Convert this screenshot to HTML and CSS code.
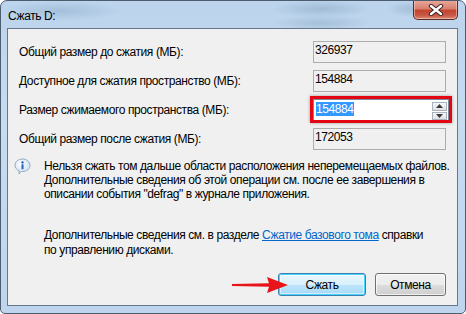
FILE: index.html
```html
<!DOCTYPE html>
<html lang="ru">
<head>
<meta charset="utf-8">
<link rel="stylesheet" href="styles.css">
</head>
<body>
<div class="window">
  <div class="titlebar">
    <span class="title">Сжать D:</span>
    <div class="close">
      <svg width="18" height="12" viewBox="0 0 18 12">
        <path d="M4 2 L14 10 M14 2 L4 10" stroke="#3a2020" stroke-width="4.2" stroke-linecap="round"/>
        <path d="M4 2 L14 10 M14 2 L4 10" stroke="#ffffff" stroke-width="2.4" stroke-linecap="round"/>
      </svg>
    </div>
  </div>
  <div class="client">
    <div class="rows">
      <div class="row"><span class="label">Общий размер до сжатия (МБ):</span><div class="field">326937</div></div>
      <div class="row"><span class="label">Доступное для сжатия пространство (МБ):</span><div class="field">154884</div></div>
      <div class="row"><span class="label">Размер сжимаемого пространства (МБ):</span>
        <div class="spin">
          <span class="spin-value"><span class="sel">154884</span></span>
          <div class="spin-btns">
            <div class="spin-btn"><svg width="7" height="4" viewBox="0 0 7 4"><path d="M0 4 L3.5 0 L7 4 Z" fill="#3a3a3a"/></svg></div>
            <div class="spin-btn"><svg width="7" height="4" viewBox="0 0 7 4"><path d="M0 0 L3.5 4 L7 0 Z" fill="#3a3a3a"/></svg></div>
          </div>
        </div>
      </div>
      <div class="row"><span class="label">Общий размер после сжатия (МБ):</span><div class="field">172053</div></div>
    </div>
    <div class="info">
      <svg class="info-icon" width="17" height="17" viewBox="0 0 17 17">
        <defs>
          <radialGradient id="bub" cx="0.4" cy="0.35" r="0.7">
            <stop offset="0" stop-color="#ffffff"/>
            <stop offset="1" stop-color="#c9dcef"/>
          </radialGradient>
        </defs>
        <path d="M8.5 1 C12.8 1 16 3.8 16 7.3 C16 10.8 12.8 13.5 8.5 13.5 L7.2 13.4 L5 16 L5.2 12.8 C2.7 11.8 1 9.7 1 7.3 C1 3.8 4.2 1 8.5 1 Z" fill="url(#bub)" stroke="#8fa9c6" stroke-width="1"/>
        <circle cx="8.5" cy="4.4" r="1.2" fill="#1d5fc2"/>
        <rect x="7.5" y="6.3" width="2" height="5" rx="0.5" fill="#1d5fc2"/>
      </svg>
      <p class="info-text">Нельзя сжать том дальше области расположения неперемещаемых файлов.<br>Дополнительные сведения об этой операции см. после ее завершения в<br>описании события "defrag" в журнале приложения.</p>
    </div>
    <p class="more">Дополнительные сведения см. в разделе <a class="link" href="#">Сжатие базового тома</a> справки<br>по управлению дисками.</p>
    <div class="buttons">
      <button class="btn btn-default">Сжать</button>
      <button class="btn">Отмена</button>
    </div>
    <svg class="arrow" width="58" height="18" viewBox="0 0 58 18">
      <path d="M1 8 L38 7.2 L36 1 L57 9 L36 17 L38 10.8 L1 10 Z" fill="#e8141a"/>
    </svg>
  </div>
</div>
</body>
</html>
```
FILE: styles.css
```css
* { box-sizing: border-box; }
html, body { margin: 0; padding: 0; background: #ffffff; }
body {
  font-family: "Liberation Sans", Arial, sans-serif;
  font-size: 12px;
  letter-spacing: -0.4px;
  color: #000;
}
.window {
  position: relative;
  width: 466px;
  height: 314px;
  border: 1px solid #4d5d70;
  border-radius: 7px 7px 5px 5px;
  background:
    radial-gradient(ellipse 60px 10px at 60px 10px, rgba(120,150,185,0.35), transparent),
    radial-gradient(ellipse 50px 9px at 320px 8px, rgba(110,140,175,0.35), transparent),
    radial-gradient(ellipse 50px 8px at 320px 22px, rgba(110,140,175,0.3), transparent),
    radial-gradient(ellipse 25px 8px at 410px 8px, rgba(110,140,175,0.3), transparent),
    linear-gradient(180deg, #bcd4ec 0%, #c6dcf1 40%, #bed5ed 100%);
  display: flex;
  flex-direction: column;
  overflow: hidden;
}
.titlebar {
  position: relative;
  height: 27px;
  display: flex;
  align-items: center;
  padding-left: 7px;
}
.title {
  font-size: 12px;
  color: #000;
  margin-top: 2px;
}
.close {
  position: absolute;
  right: 7px;
  top: -1px;
  width: 45px;
  height: 20px;
  border: 1px solid #5a2a26;
  border-top: none;
  border-radius: 0 0 5px 5px;
  background: linear-gradient(180deg, #e9a99b 0%, #d98170 45%, #c3452f 55%, #c65845 80%, #d98a72 100%);
  box-shadow: inset 0 0 0 1px rgba(255,220,210,0.5);
  display: flex;
  align-items: center;
  justify-content: center;
}
.client {
  position: relative;
  flex: 1;
  margin: 0 7px 7px 6px;
  border: 1px solid #66788c;
  background: #f0f0f0;
  display: flex;
  flex-direction: column;
}
.rows {
  display: flex;
  flex-direction: column;
  gap: 7px;
  padding: 12px 0 0 11px;
}
.row {
  display: flex;
  align-items: center;
  height: 22px;
}
.label {
  width: 294px;
}
.field {
  width: 133px;
  height: 22px;
  border: 1px solid #adadad;
  background: #f0f0f0;
  padding: 1px 0 0 1px;
  line-height: 14px;
}
.spin {
  position: relative;
  width: 136px;
  height: 22px;
  border: 1px solid #7c8a9b;
  background: #fff;
  display: flex;
  align-items: flex-start;
  justify-content: space-between;
  padding: 2px 1px 1px 2px;
}
.spin::after {
  content: "";
  position: absolute;
  left: -4px;
  right: -4px;
  top: -4px;
  bottom: -3px;
  border: 3px solid #e30613;
  box-shadow: 0 0 3px rgba(0,0,0,0.35);
}
.spin-value { line-height: 15px; }
.sel {
  background: #3399ff;
  color: #fff;
}
.spin-btns {
  display: flex;
  flex-direction: column;
  gap: 1px;
}
.spin-btn {
  width: 15px;
  height: 8.5px;
  border: 1px solid #a8b3c0;
  background: linear-gradient(180deg, #f7f7f7, #e1e1e1);
  display: flex;
  align-items: center;
  justify-content: center;
}
.info {
  display: flex;
  align-items: flex-start;
  padding: 7px 0 0 6px;
}
.info-icon { flex: none; margin-top: 1px; }
.info-text {
  margin: 2px 0 0 13px;
  line-height: 14px;
  white-space: nowrap;
}
.more {
  margin: 27px 0 0 36px;
  line-height: 15px;
  white-space: nowrap;
}
.link { color: #0066cc; text-decoration: underline; }
.buttons {
  margin-top: auto;
  display: flex;
  justify-content: flex-end;
  gap: 9px;
  padding: 0 11px 9px 0;
}
.btn {
  font-family: "Liberation Sans", Arial, sans-serif;
  font-size: 12px;
  letter-spacing: -0.4px;
  color: #000;
  height: 23px;
  border: 1px solid #707070;
  border-radius: 3px;
  background: linear-gradient(180deg, #f2f2f2 0%, #ebebeb 50%, #dddddd 51%, #cfcfcf 100%);
  box-shadow: inset 0 0 0 1px rgba(255,255,255,0.7);
  padding: 0;
  width: 71px;
}
.btn-default {
  width: 88px;
  border-color: #3c7fb1;
  box-shadow: inset 0 0 0 1px #48d2ff, inset 0 0 0 2px rgba(255,255,255,0.5);
  background: linear-gradient(180deg, #eaf6fd 0%, #d9f0fc 50%, #bee6fd 51%, #a7d9f5 100%);
}
.arrow {
  position: absolute;
  left: 223px;
  top: 247px;
}
```
